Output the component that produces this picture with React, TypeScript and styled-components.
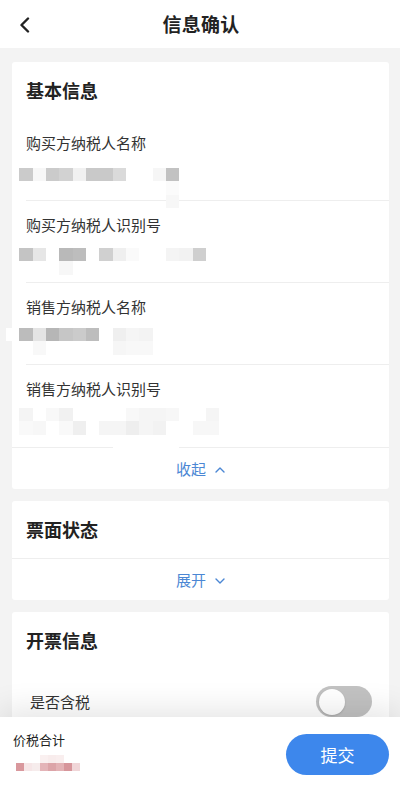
import React from "react";
import styled, { createGlobalStyle } from "styled-components";

const GlobalStyle = createGlobalStyle`
  html, body {
    margin: 0;
    padding: 0;
    background: #f3f3f3;
  }
  body {
    font-family: "Noto Sans CJK SC", "Noto Sans", sans-serif;
    -webkit-font-smoothing: antialiased;
  }
`;

// blurred values: each row is a list of cell colours, starting at x = 6
type Cells = string[][];

const buyerName: Cells = [
  ["", "#cbcbcb", "#f7f7f7", "#cbcbcb", "#d2d2d2", "#f1f1f1", "#c9c9c9", "#c9c9c9", "#dadada", "", "", "#f6f6f6", "#c2c2c2"],
  ["", "", "", "", "", "", "", "", "", "", "", "", "#fbfbfb"],
  ["", "", "", "", "", "", "", "", "", "", "", "", "#f7f7f7"],
];

const buyerId: Cells = [
  ["", "#c4c4c4", "#e6e6e6", "", "#b9b9b9", "#bdbdbd", "", "#d0d0d0", "#efefef", "#fafafa", "", "", "#f4f4f4", "#f2f2f2", "#cfcfcf"],
  ["", "", "", "", "#f7f7f7"],
];

const sellerName: Cells = [
  ["#ffffff", "#bcbcbc", "#e4e4e4", "#b6b6b6", "#c6c6c6", "#cbcbcb", "#bdbdbd", "", "#efefef", "#f5f5f5", "#f3f3f3"],
  ["", "", "#f8f8f8", "", "", "", "", "", "#f6f6f6", "#f8f8f8", "#f8f8f8"],
];

const sellerId: Cells = [
  ["", "#f4f4f4", "", "#f8f8f8", "#f1f1f1", "", "", "", "", "#f8f8f8", "#f5f5f5", "#f5f5f5", "#f7f7f7", "", "", "#f5f5f5"],
  ["", "#f9f9f9", "#f7f7f7", "", "#f9f9f9", "#efefef", "", "#f5f5f5", "#f5f5f5", "#eeeeee", "#f5f5f5", "#f2f2f2", "", "", "#f7f7f7", "#f7f7f7"],
  ["", "", "", "", "", "", "", "", "#ffffff", "#ffffff", "#ffffff", "#ffffff", "#ffffff"],
];

const totalCells: Cells = [
  ["", "", "", "#faf0f0", "#f8ecec", "#f9eeee"],
  ["#d9989d", "#f6e6e7", "#f6ecec", "#e4b4b8", "#dca4a8", "#e3b2b5", "#d7969b", "#f0d6d8"],
];

const fields = [
  { label: "购买方纳税人名称", cells: buyerName, offset: 15 },
  { label: "购买方纳税人识别号", cells: buyerId, offset: 13 },
  { label: "销售方纳税人名称", cells: sellerName, offset: 11 },
  { label: "销售方纳税人识别号", cells: sellerId, offset: 9 },
];

const Chevron = ({ up }: { up?: boolean }) => (
  <svg width="10" height="6" viewBox="0 0 10 6" fill="none">
    <path
      d={up ? "M1 5 L5 1 L9 5" : "M1 1 L5 5 L9 1"}
      stroke="#4b87d4"
      strokeWidth="1.4"
      strokeLinecap="round"
      strokeLinejoin="round"
    />
  </svg>
);

const Mosaic = ({ cells, size }: { cells: Cells; size: number }) => (
  <Blur>
    {cells.map((row, i) => (
      <BlurRow key={i}>
        {row.map((c, j) => (
          <BlurCell key={j} $size={size} style={{ background: c || "transparent" }} />
        ))}
      </BlurRow>
    ))}
  </Blur>
);

const App = () => {
  return (
    <Page>
      <GlobalStyle />
      <Header>
        <Back>
          <svg width="12" height="16" viewBox="0 0 12 16" fill="none">
            <path d="M9 1.5 L2.5 8 L9 14.5" stroke="#222" strokeWidth="2.4" strokeLinecap="round" strokeLinejoin="round" />
          </svg>
        </Back>
        <HeaderTitle>信息确认</HeaderTitle>
      </Header>

      <Content>
        <Card>
          <CardTitle>基本信息</CardTitle>
          {fields.map((f) => (
            <Field key={f.label}>
              <FieldLabel>{f.label}</FieldLabel>
              <FieldValue $offset={f.offset}>
                <Mosaic cells={f.cells} size={13.33} />
              </FieldValue>
            </Field>
          ))}
          <Toggle>
            收起 <Chevron up />
          </Toggle>
        </Card>

        <Card>
          <CardTitle>票面状态</CardTitle>
          <Toggle>
            展开 <Chevron />
          </Toggle>
        </Card>

        <Card>
          <CardTitle>开票信息</CardTitle>
          <SwitchRow>
            <SwitchLabel>是否含税</SwitchLabel>
            <Switch>
              <Knob />
            </Switch>
          </SwitchRow>
        </Card>
      </Content>

      <Footer>
        <Total>
          <TotalLabel>价税合计</TotalLabel>
          <TotalValue>
            <Mosaic cells={totalCells} size={8} />
          </TotalValue>
        </Total>
        <Submit>提交</Submit>
      </Footer>
    </Page>
  );
};

export default App;

const Page = styled.div`
  height: 100vh;
  display: flex;
  flex-direction: column;
  overflow: hidden;
  background: #f3f3f3;
`;

const Header = styled.div`
  flex: none;
  height: 48px;
  background: #fff;
  display: flex;
  align-items: center;
  justify-content: center;
  position: relative;
`;

const Back = styled.div`
  position: absolute;
  left: 19px;
  top: 17px;
  display: flex;
`;

const HeaderTitle = styled.div`
  font-size: 19px;
  font-weight: 700;
  color: #222;
  line-height: 24px;
  letter-spacing: 0.3px;
  margin-left: 2px;
`;

const Content = styled.div`
  flex: 1;
  overflow: hidden;
  padding: 14px 11px 0 12px;
  display: flex;
  flex-direction: column;
  gap: 12px;
`;

const Card = styled.div`
  background: #fff;
  border-radius: 3px;
  flex: none;
`;

const CardTitle = styled.div`
  height: 57px;
  box-sizing: border-box;
  padding: 17px 0 0 14px;
  font-size: 18px;
  font-weight: 700;
  line-height: 22px;
  color: #222;
`;

const Field = styled.div`
  height: 82px;
  box-sizing: border-box;
  margin-left: 14px;
  padding-top: 14px;
  border-bottom: 1px solid #eeeeee;

  &:nth-last-of-type(2) {
    border-bottom: none;
  }
`;

const FieldLabel = styled.div`
  font-size: 15px;
  line-height: 20px;
  color: #333;
`;

const FieldValue = styled.div<{ $offset: number }>`
  margin-top: ${(p) => p.$offset}px;
  margin-left: -20px;
  position: relative;
  z-index: 1;
`;

const Blur = styled.div`
  display: flex;
  flex-direction: column;
`;

const BlurRow = styled.div`
  display: flex;
`;

const BlurCell = styled.div<{ $size: number }>`
  width: ${(p) => p.$size}px;
  height: ${(p) => p.$size}px;
  flex: none;
`;

const Toggle = styled.div`
  height: 42px;
  box-sizing: border-box;
  border-top: 1px solid #eeeeee;
  display: flex;
  align-items: center;
  justify-content: center;
  gap: 9px;
  font-size: 15px;
  color: #4b87d4;

  svg {
    margin-top: 2px;
  }
`;

const SwitchRow = styled.div`
  display: flex;
  align-items: center;
  justify-content: space-between;
  padding: 17px 17px 18px 18px;
`;

const SwitchLabel = styled.div`
  font-size: 15px;
  line-height: 20px;
  color: #333;
`;

const Switch = styled.div`
  width: 56px;
  height: 31px;
  border-radius: 16px;
  background: #c2c2c2;
  display: flex;
  align-items: center;
  padding-left: 3px;
  box-sizing: border-box;
`;

const Knob = styled.div`
  width: 26px;
  height: 26px;
  border-radius: 50%;
  background: #fff;
  box-shadow: 0 1px 2px rgba(0, 0, 0, 0.15);
`;

const Footer = styled.div`
  flex: none;
  height: 72px;
  box-sizing: border-box;
  background: #fff;
  position: relative;
  z-index: 2;
  box-shadow: 0 -8px 30px rgba(0, 0, 0, 0.1);
  display: flex;
  align-items: flex-start;
  justify-content: space-between;
  padding: 14px 11px 0 13px;
`;

const Total = styled.div`
  display: flex;
  flex-direction: column;
`;

const TotalLabel = styled.div`
  font-size: 13px;
  line-height: 18px;
  color: #222;
`;

const TotalValue = styled.div`
  margin-top: 6px;
  margin-left: 3px;
`;

const Submit = styled.button`
  margin-top: 3px;
  width: 103px;
  height: 41px;
  border: 0;
  border-radius: 21px;
  background: #3d87ec;
  color: #fff;
  font-family: "Noto Sans CJK SC", "Noto Sans", sans-serif;
  font-size: 17px;
  padding: 0;
`;
